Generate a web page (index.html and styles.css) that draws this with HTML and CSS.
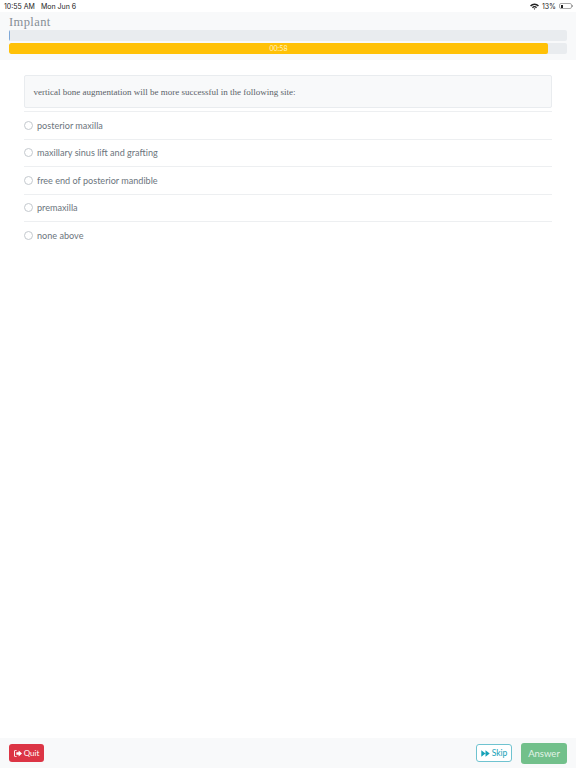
FILE: index.html
```html
<!DOCTYPE html>
<html lang="en">

<head>
    <meta charset="UTF-8" />
    <meta name="viewport" content="width=device-width, initial-scale=1.0" />
    <title>Implant</title>
    <link rel="stylesheet" href="styles.css">
</head>

<body>
    <div class="wrapper">
        <div class="status-bar">
            <div class="status-left">
                <span>10:55 AM</span>
                <span>Mon Jun 6</span>
            </div>
            <div class="status-right">
                <svg class="wifi" viewBox="0 0 16 12" width="9" height="7">
                    <path d="M0 4 A11 11 0 0 1 16 4 L14 6 A8 8 0 0 0 2 6 Z" fill="#222" />
                    <path d="M3.5 7.2 A6 6 0 0 1 12.500 7.200 L10.700 9 A3.600 3.600 0 0 0 5.300 9 Z" fill="#222" />
                    <path d="M6.500 10 A2.200 2.200 0 0 1 9.500 10 L8 11.800 Z" fill="#222" />
                </svg>
                <span>13%</span>
                <div class="battery">
                    <div class="battery-level"></div>
                </div>
            </div>
        </div>

        <!-- Header -->
        <div class="header">
            <div class="title">Implant</div>
            <div class="progress progress-question">
                <div class="progress-bar-blue"></div>
            </div>
            <div class="progress">
                <div class="progress-bar-time">00:58</div>
            </div>
        </div>

        <!-- Question -->
        <div class="content">
            <div class="question">vertical bone augmentation will be more successful in the following site:</div>
            <ul class="options">
                <li><span class="radio"></span>posterior maxilla</li>
                <li><span class="radio"></span>maxillary sinus lift and grafting</li>
                <li><span class="radio"></span>free end of posterior mandible</li>
                <li><span class="radio"></span>premaxilla</li>
                <li><span class="radio"></span>none above</li>
            </ul>
        </div>

        <!-- Footer -->
        <div class="footer">
            <button class="btn btn-quit">
                <svg viewBox="0 0 12 10" width="8" height="7">
                    <path d="M4 0 H1.500 Q0 0 0 1.500 V8.500 Q0 10 1.500 10 H4 V8.600 H1.400 V1.400 H4 Z" fill="#fff" />
                    <path d="M7 0.500 L12 5 L7 9.500 V7 H3.500 V3 H7 Z" fill="#fff" />
                </svg>
                Quit
            </button>
            <div class="footer-right">
                <button class="btn btn-skip">
                    <svg viewBox="0 0 12 10" width="9" height="7">
                        <path d="M0 0.500 L6 5 L0 9.500 Z M6 0.500 L12 5 L6 9.500 Z" fill="#17a2b8" />
                    </svg>
                    Skip
                </button>
                <button class="btn btn-answer">Answer</button>
            </div>
        </div>
    </div>
</body>

</html>
```

FILE: styles.css
```css
* {
    box-sizing: border-box;
}

html,
body {
    margin: 0;
    padding: 0;
    background: #ffffff;
    height: 100%;
    overflow: hidden;
}

.wrapper {
    display: flex;
    flex-direction: column;
    height: 768px;
    font-family: "Lato", "Open Sans", sans-serif;
}

.status-bar {
    display: flex;
    justify-content: space-between;
    align-items: center;
    height: 12px;
    padding: 0 3px 0 4px;
    font-family: "Inter", sans-serif;
    font-size: 7px;
    color: #222;
}

.status-left {
    display: flex;
    gap: 6px;
}

.status-right {
    display: flex;
    align-items: center;
    gap: 3px;
}

.battery {
    position: relative;
    width: 13px;
    height: 6px;
    margin-right: 1px;
    border: 1px solid #aaa;
    border-radius: 2px;
    padding: 0.500px;
}

.battery::after {
    content: "";
    position: absolute;
    top: 1px;
    right: -2px;
    width: 1px;
    height: 2px;
    background: #aaa;
}

.battery-level {
    width: 2px;
    height: 100%;
    background: #222;
}

.header {
    background: #f8f9fa;
    height: 48px;
    padding: 2px 9px 0;
}

.title {
    font-family: "Liberation Serif", serif;
    font-size: 12.500px;
    line-height: 16px;
    color: #868e96;
    letter-spacing: 0.400px;
}

.progress {
    height: 11px;
    margin-bottom: 2px;
    background: #e9ecef;
    border-radius: 2px;
    overflow: hidden;
}

.progress-bar-blue {
    width: 1px;
    height: 100%;
    background: #7fa8d8;
}

.progress-bar-time {
    width: 539px;
    height: 100%;
    background: #ffc107;
    border-radius: 2px;
    color: #fff3c4;
    font-size: 7px;
    line-height: 11px;
    text-align: center;
}

.content {
    flex: 1;
    padding: 15px 24px 0;
}

.question {
    background: #f8f9fa;
    border: 1px solid #e9ecef;
    border-radius: 2px;
    height: 33px;
    padding: 0 8.500px;
    font-family: "Liberation Serif", serif;
    font-size: 9px;
    line-height: 32px;
    color: #5a6268;
}

.options {
    list-style: none;
    margin: 3px 0 0;
    padding: 0;
}

.options li {
    display: flex;
    align-items: center;
    gap: 4px;
    height: 27.500px;
    border-top: 1px solid #edeff1;
    font-size: 9.100px;
    color: #6c757d;
}

.radio {
    width: 9px;
    height: 9px;
    border: 1px solid #c4c9ce;
    border-radius: 50%;
    background: #ffffff;
}

.footer {
    display: flex;
    justify-content: space-between;
    align-items: center;
    height: 30px;
    padding: 0 9px;
    background: #f8f9fa;
}

.footer-right {
    display: flex;
    align-items: center;
    gap: 9px;
}

.btn {
    display: flex;
    align-items: center;
    justify-content: center;
    gap: 2px;
    border-radius: 3px;
    font-family: inherit;
    font-size: 8px;
    padding: 0;
}

.btn-quit {
    width: 35px;
    height: 18px;
    background: #dc3545;
    border: none;
    color: #fff;
}

.btn-skip {
    width: 36px;
    height: 18px;
    background: #fff;
    border: 1px solid #6fc3d0;
    color: #17a2b8;
    font-size: 8.500px;
}

.btn-answer {
    width: 46px;
    height: 21px;
    background: #72c08b;
    border: none;
    color: #e3f3e8;
    font-size: 9.500px;
}
```
